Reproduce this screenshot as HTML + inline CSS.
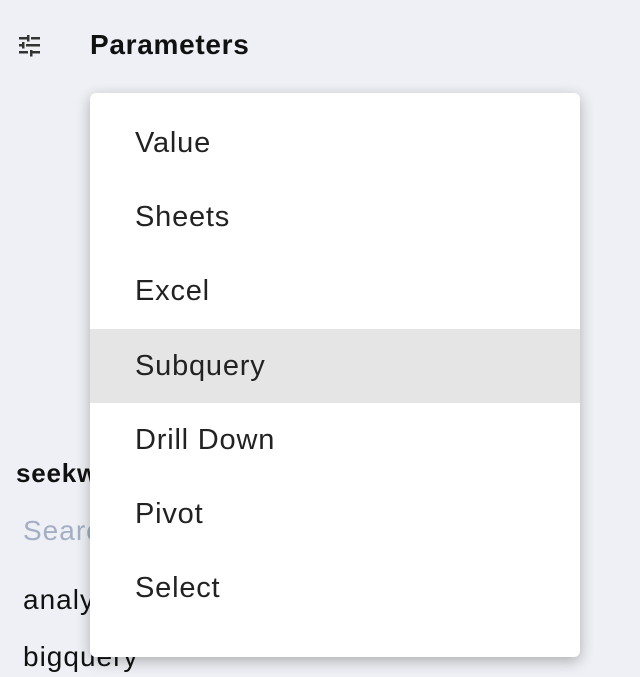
<!DOCTYPE html>
<html><head><style>
body{margin:0;width:640px;height:677px;background:#eef0f5;font-family:"Liberation Sans",sans-serif;position:relative;overflow:hidden;color:#111}
.a{position:absolute;white-space:nowrap}
.menu{position:absolute;left:90px;top:93px;width:490px;height:564px;background:#fff;border-radius:6px;box-shadow:0 4px 14px rgba(0,0,0,.28)}
.it{position:absolute;left:0;width:490px;height:74px;line-height:74px;padding-left:45px;box-sizing:border-box;font-size:29px;color:#222;letter-spacing:0.8px}
</style></head><body>
<svg class="a" style="left:18px;top:35px" width="24" height="24" viewBox="0 0 24 24" fill="#333"><path d="M1 2h8v2.5H1zM13 2h9v2.5H13zM9 0h2.5v6.5H9zM1 9h3v2.5H1zM8 9h14v2.5H8zM4 7h2.5v6.5H4zM1 16h9v2.5H1zM14 16h8v2.5H14zM12 15h2.5v6.5H12z"/></svg>
<div class="a" style="left:90px;top:29px;font-size:28px;font-weight:bold;letter-spacing:0.7px">Parameters</div>
<div class="a" style="left:16px;top:458px;font-size:26px;font-weight:bold;letter-spacing:0.8px">seekw</div>
<div class="a" style="left:23px;top:515px;font-size:28px;color:#a3afc4;letter-spacing:1px">Search</div>
<div class="a" style="left:23px;top:584px;font-size:28px;letter-spacing:1px">analytics</div>
<div class="a" style="left:23px;top:641px;font-size:28px;letter-spacing:1px">bigquery</div>
<div class="menu">
<div class="it" style="top:13px">Value</div>
<div class="it" style="top:87px">Sheets</div>
<div class="it" style="top:161px">Excel</div>
<div class="it" style="top:236px;background:#e5e5e5">Subquery</div>
<div class="it" style="top:310px">Drill Down</div>
<div class="it" style="top:384px">Pivot</div>
<div class="it" style="top:458px">Select</div>
</div>
</body></html>
